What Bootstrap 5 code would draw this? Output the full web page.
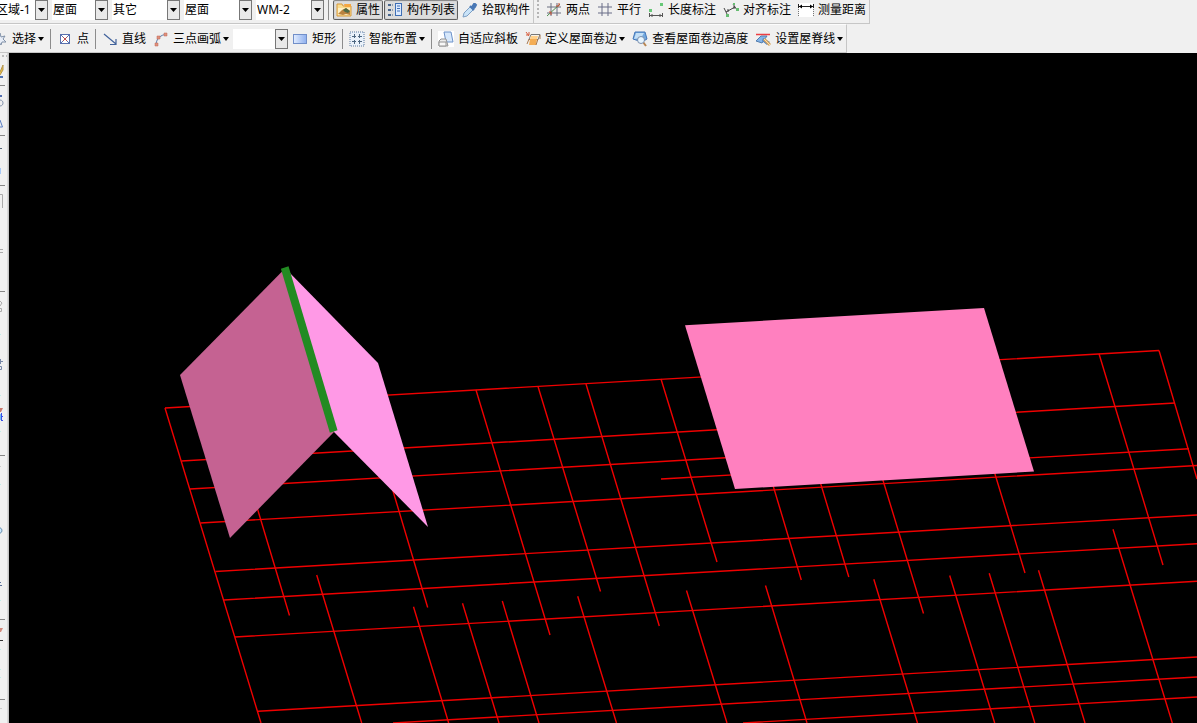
<!DOCTYPE html>
<html lang="zh-CN">
<head>
<meta charset="utf-8">
<meta name="viewport" content="width=device-width, initial-scale=1">
<title>屋面 WM-2</title>
<link href="https://cdn.jsdelivr.net/npm/bootstrap@5.3.0/dist/css/bootstrap.min.css" rel="stylesheet">
<script src="https://cdn.jsdelivr.net/npm/bootstrap@5.3.0/dist/js/bootstrap.bundle.min.js"></script>
<style>
body{font-family:"Noto Sans","Noto Sans CJK SC",sans-serif;font-size:12px;background:#f0f0f0;color:#000}
.tools{background:#f0f0f0;gap:1px;border-right:1px solid #c6c6c6;border-bottom:1px solid #c6c6c6;white-space:nowrap}
.tools-top{height:24px;align-items:flex-start}
.tools-bottom{height:29px;align-items:center;border-top:1px solid #fcfcfc;margin-left:-11px}
.first-group{margin-left:-7px}
.tool{display:flex;align-items:center;height:20px;padding:0 2px;border:1px solid transparent;border-radius:2px;background:none;font-size:12px;line-height:18px;color:#000}
.tool:hover{background:#e2e6ea}
.tool svg{width:16px;height:16px;margin-right:4px;flex:none}
.tool.on{border:1px solid #5f5f5f;border-top-color:#8a8a8a;background:#dcdcdc;box-shadow:inset 0 0 1px #999}
.drop::after{content:"";margin-left:2px;border:3px solid transparent;border-top:4px solid #000;border-bottom:0}
.split{width:1px;height:20px;background:#8c8c8c;margin:0 2px}
.tools-top .split{margin:0 3px}
.combo{appearance:none;height:20px;border:0;border-radius:0;padding:0 14px 0 1px;font-size:12px;line-height:18px;color:#000;background:#fff url("data:image/svg+xml,%3Csvg xmlns='http://www.w3.org/2000/svg' width='13' height='20'%3E%3Crect x='.5' y='.5' width='12' height='19' fill='%23e9e9e9' stroke='%23777'/%3E%3Cpath d='M3 8h7L6.500 12z'/%3E%3C/svg%3E") right center no-repeat}
.w-zone{width:55px}.w-short{width:56px}.w-mid{width:68px}
.w-zone{padding-left:3px}
.group-gap{gap:4px}
.grip{width:2px;height:20px;margin:0 3px;background:repeating-linear-gradient(#b4b4b4 0 2px,#f0f0f0 2px 4px)}
.dock{width:9px;border-right:1px solid #c4c4c4;box-shadow:inset -1px 0 #d9d9d9}
.scene{background:#000;min-width:0}
</style>
</head>
<body class="d-flex flex-column vh-100 overflow-hidden">
<header class="overflow-hidden flex-shrink-0">
  <div class="d-flex">
    <div class="tools tools-top d-flex" role="toolbar" aria-label="构件">
      <div class="first-group d-flex group-gap">
        <select class="combo w-zone" aria-label="区域"><option>区域-1</option></select>
        <select class="combo w-short" aria-label="楼层"><option>屋面</option></select>
        <select class="combo w-mid" aria-label="分类"><option>其它</option></select>
        <select class="combo w-mid" aria-label="类型"><option>屋面</option></select>
        <select class="combo w-mid" aria-label="名称"><option>WM-2</option></select>
      </div>
      <div class="split"></div>
      <button type="button" class="tool on"><svg viewBox="0 0 16 16"><path d="M1 2h5l1 2h8v10H1z" fill="#f9dc90" stroke="#d79a3c"/><path d="M2 6h12v7H2z" fill="#fff0c4"/><path d="M2 12l4-4 4-2 4 3v4l-4-1-3 1z" fill="#b98240"/><path d="M7 8l3-2 4 3-2 2-3-1z" fill="#4f6a46"/><path d="M8 2h7v3H9z" fill="#f5a742"/></svg>属性</button>
      <button type="button" class="tool on"><svg viewBox="0 0 16 16"><path d="M1 2h3v2H1zM1 7h3v2H1zM1 12h3v2H1z" fill="#47658c"/><path d="M5 3h2M5 8h2M5 13h2" stroke="#47658c" stroke-dasharray="1 1"/><rect x="8.500" y="1.500" width="6" height="12" fill="#dceaff" stroke="#3f6fb5"/><path d="M10 4h3M10 6.500h3M10 9h3" stroke="#3f6fb5"/></svg>构件列表</button>
      <button type="button" class="tool"><svg viewBox="0 0 16 16"><path d="M1 15l1-4 6-6 3 3-6 6z" fill="#c9e3f8" stroke="#7d9fc4"/><path d="M8 4l4 4M10 5l2-3 1 0 1 1-1 2-2 2z" fill="#4a78b5" stroke="#4a78b5" stroke-width="2"/></svg>拾取构件</button>
    </div>
    <div class="tools tools-top d-flex" role="toolbar" aria-label="标注">
      <div class="grip"></div>
      <button type="button" class="tool"><svg viewBox="0 0 16 16" fill="none"><path d="M5 1v13M11 1v13M1 5h14M1 11h14" stroke="#6b6f80"/><path d="M1 14L14 2" stroke="#4f8f50"/><path d="M10 4h3V1M3 10h2v3" stroke="#d04f38"/></svg>两点</button>
      <button type="button" class="tool"><svg viewBox="0 0 16 16" fill="none"><path d="M5 1v13M11 1v13M1 5h14M1 11h14" stroke="#696c87"/></svg>平行</button>
      <button type="button" class="tool"><svg viewBox="0 0 16 16"><path d="M1 7h3v3H1zM12 1h3v3h-3z" fill="#67c878"/><path d="M1.500 11v4M14.500 11v4M2 13.500h12M4 12v3M12 12v3" fill="none" stroke="#555"/></svg>长度标注</button>
      <button type="button" class="tool"><svg viewBox="0 0 16 16"><path d="M1 6l3 6M3 10l9-5M10 2l4 6M5 7v3M11 4v3" fill="none" stroke="#444"/><path d="M3 12h3v3H3zM13 6h3v3h-3zM10 1h2v2h-2z" fill="#67bd72"/></svg>对齐标注</button>
      <button type="button" class="tool"><svg viewBox="0 0 16 16"><path fill="#fff" d="M1 1h14v14H1z"/><path d="M.5 2v4M15.500 2v4M1 4.500h14" stroke="#222"/><path d="M1 4.500l3-2v4zM15 4.500l-3-2v4z"/><path d="M.5 7v8M15.500 7v8" stroke="#777" stroke-dasharray="1 1"/></svg>测量距离</button>
    </div>
  </div>
  <div class="d-flex">
    <div class="tools tools-bottom d-flex" role="toolbar" aria-label="绘图">
      <button type="button" class="tool drop"><svg viewBox="0 0 16 16"><path d="M8 2l1 4 4-1-2 3 3 3-4 0-1 3-2-3-4 1 2-3z" fill="#e8eef8" stroke="#8191a8"/></svg>选择</button>
      <div class="split"></div>
      <button type="button" class="tool"><svg viewBox="0 0 16 16" fill="none"><rect x="3.500" y="3.500" width="9" height="9" fill="#fff" stroke="#5870ae"/><path d="M5 5l6 6M11 5l-6 6" stroke="#b95050"/><path d="M3 3l3 3M13 3l-3 3M3 13l3-3M13 13l-3-3" stroke="#5870ae"/></svg>点</button>
      <div class="split"></div>
      <button type="button" class="tool"><svg viewBox="0 0 16 16"><path d="M2 3l12 10M14 8v5.500H8" fill="none" stroke="#42639c" stroke-width="1.200"/></svg>直线</button>
      <button type="button" class="tool drop"><svg viewBox="0 0 16 16"><path d="M3 13Q4 5 13 3" fill="none" stroke="#6a87b0" stroke-width="1.200"/><path d="M2 12h3v3H2zM4 5h3v3H4zM11 2h3v3h-3z" fill="#df927d" stroke="#c26754" stroke-width=".5"/></svg>三点画弧</button>
      <select class="combo w-zone" aria-label="画弧方式"><option></option></select>
      <button type="button" class="tool"><svg viewBox="0 0 16 16"><defs><linearGradient id="box"><stop stop-color="#e2edff"/><stop offset="1" stop-color="#8eafee"/></linearGradient></defs><rect x="1.500" y="3.500" width="13" height="9" fill="url(#box)" stroke="#718fc9"/></svg>矩形</button>
      <div class="split"></div>
      <button type="button" class="tool drop"><svg viewBox="0 0 16 16" fill="none" stroke="#4c6680"><rect x="1" y="1" width="14" height="14" fill="#e9f1fa" stroke="#5878a0" stroke-dasharray="1 1"/><path d="M5.500 3v4M3 5.500h4M10.500 3v4M9 5.500h4M5.500 9v4M3 10.500h4M10.500 9v4M9 10.500h4"/></svg>智能布置</button>
      <div class="split"></div>
      <button type="button" class="tool"><svg viewBox="0 0 16 16"><path fill="#fff" d="M0 0h16v16H0z"/><path d="M6 1h7l2 10H8z" fill="#d7e8fb" stroke="#6d92c9"/><path d="M3 8h5l2 7H1v-5z" fill="#ececec" stroke="#929292"/><path d="M1 11h7v4H1z" fill="#f8f8f8" stroke="#929292"/></svg>自适应斜板</button>
      <button type="button" class="tool drop"><svg viewBox="0 0 16 16"><path d="M6 3.500h9l-2 5H4z" fill="#f8f2e8" stroke="#777"/><path d="M5 8h7l-1 6H4z" fill="#f4ad55"/><path d="M4 8l-2 5M13 8l-2 6M15 4v4" fill="none" stroke="#a87950"/><path d="M6 5h7l-1 3H5z" fill="#ffd08a"/><path d="M1 1l3 4M1 4h3V1" fill="none" stroke="#d65a3a"/></svg>定义屋面卷边</button>
      <button type="button" class="tool"><svg viewBox="0 0 16 16"><path d="M3 1h10l2 7-5 3-9-3z" fill="#71a8df" stroke="#4476b8"/><path d="M4 2h8l-3 5-7 1z" fill="#c3dff6"/><path d="M11 11l3 4" stroke="#b88652" stroke-width="2"/><circle cx="9" cy="9" r="3.500" fill="#e7f6ff" stroke="#7a8dab"/></svg>查看屋面卷边高度</button>
      <button type="button" class="tool drop"><svg viewBox="0 0 16 16"><path d="M1 10l5-5h6l-5 7z" fill="#83b4e8" stroke="#527dae"/><path d="M8 7l7 4-3 3-5-4z" fill="#4d83c4"/><path d="M1 3.500h14" stroke="#ed3e42" stroke-width="1.500"/><path d="M9 8l6 6" stroke="#d8a35c" stroke-width="3"/><path d="M9 8l6 6" stroke="#f7e0b5"/></svg>设置屋脊线</button>
    </div>
  </div>
</header>
<main class="d-flex flex-grow-1 overflow-hidden">
  <aside class="dock flex-shrink-0 overflow-hidden" aria-label="工具栏">
    <svg width="7" height="670" viewBox="0 53 7 670" fill="none" aria-hidden="true">
      <path d="M2 56h2M6 56h1" stroke="#bbb" stroke-width="2"/>
      <path d="M0 72l3-7v5l-3 5" fill="#e7bf42" stroke="#b4954e"/><path d="M0 77h3" stroke="#5074b3" stroke-width="2"/>
      <path d="M0 85.500h5M0 135.500h5M0 185.500h5M0 291.500h5M0 455.500h5M0 619.500h5M0 699.500h5" stroke="#858585"/>
      <path d="M0 96h2" stroke="#526eb0" stroke-width="2"/><path d="M0 100c4 0 4 6 0 6" stroke="#8493ac"/>
      <path d="M0 120l2.500 7H0" stroke="#5a7fc4"/><path d="M0 148.500h2" stroke="#567"/>
      <path d="M0 168h1v6H0z" fill="#a6c8f5"/><path d="M0 194.500h2.500V208" stroke="#aaa"/>
      <path d="M0 249.500h3M0 252.500h3" stroke="#aaa"/><path d="M0 301l2 2-2 3M0 308.500h1.500v3H0" stroke="#aaa"/>
      <path d="M0 334.500h1M0 395.500h1M0 431.500h1M0 484.500h1M0 600.500h1M0 649.500h1M0 669.500h1M0 677.500h1" stroke="#bfeee8"/>
      <path d="M0 361.500h3M.5 359v5M0 366.500h1.500v3H0" stroke="#7888a8"/>
      <path d="M0 408h3l-2 4H0z" fill="#c9796e"/><path d="M0 414h1v6H0z" fill="#74bdf5"/><path d="M1.500 413v8M2 416.500h1M2 420.500h1" stroke="#3b50e8"/>
      <path d="M0 528c2.500 0 2.500 5 0 5" fill="#cdeaff" stroke="#5a84a7"/><path d="M0 582.500h1M0 585.500h2" stroke="#59709a"/>
      <path d="M0 628h3l-2 4H0z" fill="#d18a7d"/><path d="M0 640.500h3" stroke="#333"/><path d="M0 708.500h2M0 466.500h1" stroke="#ccc"/>
    </svg>
  </aside>
  <section class="scene flex-grow-1" aria-label="三维视图">
    <svg class="d-block w-100 h-100" viewBox="9 53 1188 670" preserveAspectRatio="xMinYMin slice" role="img" aria-label="屋面模型与轴网">
      <g fill="none" stroke="#f00000" stroke-width="1.400">
        <path d="M165 408L1159 350.500M181.500 461L1175 403M190 489L900 447.600M661 479L1189 448.700M200.500 523L1197 465.500M215.500 571.500L1197 515M224 600L1197 543.700M235 637L1197 581.300M258 711.300L1197 657M393 723L1197 677M743 723L1197 697"/>
        <path d="M165 408L261 723M226 404L289.500 615.500M365 397L427.700 607.500M476 390L550 635M538 386.500L600.500 591.500M586 384L659.300 626M661 379L717 562M743 385L801.300 580M791 385L848.800 577M854 385L923.500 613.500M968 385L1025 573M1099 353.800L1163 565M1159 350.500L1197 479"/>
        <path d="M316.700 575L361.700 723M413.500 606.700L448.700 723M462.500 603.300L499 723M502.300 601L539 723M577.700 596.300L616.500 723M686.500 590.500L727 723M765.500 585.500L807 723M873.800 579.300L917.500 723M949.700 575.500L994.700 723M989.200 573.300L1034.800 723M1038.500 570.300L1085 723M1113 529.300L1172.300 723"/>
      </g>
      <path d="M284.500 269L180 375l50 163 104-106z" fill="#c56292"/>
      <path d="M285 268l93 95 50 164-94-95z" fill="#ff99e6"/>
      <path d="M284.700 267.500L333.700 431.500" stroke="#228b22" stroke-width="8"/>
      <path d="M685 325.300L984 308l50 163.500L735 489z" fill="#ff80bf"/>
    </svg>
  </section>
</main>
</body>
</html>
